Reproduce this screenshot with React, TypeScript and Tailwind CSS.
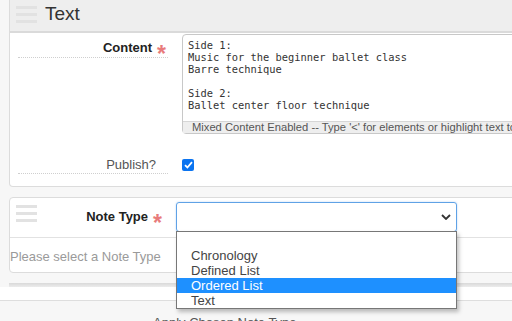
import React from 'react';

const sans = { fontFamily: '"Liberation Sans", Arial, sans-serif' };

/** 三条横线拖拽把手 */
function Handle() {
  return (
    <div className="flex w-[21px] flex-col gap-[4px]">
      <div className="h-[3px] bg-[#e2e2e2]" />
      <div className="h-[3px] bg-[#e2e2e2]" />
      <div className="h-[3px] bg-[#e2e2e2]" />
    </div>
  );
}

function Star() {
  return <span className="relative top-[3px] ml-[5px] text-[23px] leading-none font-bold text-[#e87b7b]">*</span>;
}

export default function App() {
  const options = ['', 'Chronology', 'Defined List', 'Ordered List', 'Text'];
  return (
    <div className="relative h-[321px] w-[512px] overflow-hidden bg-[#f7f7f7] text-[13px]" style={sans}>
      <div className="pl-[9px]">
        {/* Text 面板 */}
        <div className="w-[540px] rounded-b-[4px] border border-t-0 border-[#dcdcdc] bg-white">
          <div className="flex h-[33px] items-center gap-[8px] border-b-2 border-[#dadada] bg-[#eeeeee] pl-[6px] pb-[2px]">
            <Handle />
            <span className="text-[19px] text-[#333]">Text</span>
          </div>
          <div className="pb-[12px]">
            <div className="flex pt-[1px]">
              <div className="ml-[8px] flex h-[24px] w-[150px] items-start justify-end border-b border-dotted border-[#cfcfcf] pr-[2px] pt-[6px]">
                <span className="font-bold leading-4 text-[#222]">Content</span>
                <Star />
              </div>
              <div className="ml-[14px] flex h-[100px] w-[360px] flex-col rounded-[4px] border border-[#c8c8c8]">
                <pre
                  className="flex-1 pl-[5px] pt-[4px] text-[10.4px] leading-[12px] text-[#333]"
                  style={{ fontFamily: '"DejaVu Sans Mono", monospace' }}
                >{`Side 1:
Music for the beginner ballet class
Barre technique

Side 2:
Ballet center floor technique`}</pre>
                <div className="h-[12px] overflow-hidden whitespace-nowrap border-t border-[#d6d6d6] bg-[#eeeeee] pl-[9px] text-[11.2px] leading-[11px] text-[#555]">
                  Mixed Content Enabled -- Type '&lt;' for elements or highlight text to wrap
                </div>
              </div>
            </div>
            <div className="mt-[16px] flex">
              <div className="ml-[8px] flex h-[24px] w-[150px] items-start justify-end border-b border-dotted border-[#cfcfcf] pr-[12px] pt-[7px]">
                <span className="leading-4 text-[#555]">Publish?</span>
              </div>
              <div className="ml-[14px] mt-[9px] flex h-[12px] w-[12px] items-center justify-center rounded-[2px] bg-[#0b74f0]">
                <svg width="9" height="8" viewBox="0 0 9 8">
                  <path d="M1 4.2 L3.4 6.5 L8 1.2" stroke="white" strokeWidth="1.8" fill="none" />
                </svg>
              </div>
            </div>
          </div>
        </div>

        {/* Note Type 面板 */}
        <div className="mt-[10px] w-[540px] rounded-[4px] border border-[#dcdcdc] bg-white">
          <div className="flex h-[40px] border-b border-[#e2e2e2]">
            <div className="pl-[6px] pt-[7px]">
              <Handle />
            </div>
            <div className="flex w-[127px] justify-end pr-[2px] pt-[11px]">
              <span className="font-bold leading-4 text-[#222]">Note Type</span>
              <Star />
            </div>
            <div className="ml-[12px] mt-[4px] flex h-[30px] w-[281px] items-center justify-end rounded-[3px] border border-[#5fa2e6] pr-[5px] shadow-[0_0_2px_rgba(80,150,230,0.4)]">
              <svg width="10" height="6" viewBox="0 0 10 6">
                <path d="M1 1 L5 5 L9 1" stroke="#333" strokeWidth="1.8" fill="none" />
              </svg>
            </div>
          </div>
          <div className="h-[34px] pt-[11px] leading-4 text-[#9a9a9a]">Please select a Note Type</div>
        </div>

        <div className="mt-[10px] h-[4px] bg-gradient-to-b from-[#d9d9d9] to-[#ececec]" />
      </div>
      <div className="h-[14px] border-b border-[#dedede] bg-white" />
      <div className="pl-[153px] pt-[14px] text-[13px] leading-4 text-[#555]">Apply Chosen Note Type</div>

      {/* 下拉列表 */}
      <div className="absolute left-[176px] top-[231px] w-[281px] border border-[#777] bg-white pt-[1px] shadow-[2px_3px_4px_rgba(0,0,0,0.25)]">
        {options.map((o) => (
          <div
            key={o || 'empty'}
            className={
              o === 'Ordered List'
                ? 'flex h-[15px] items-center bg-[#1e90ff] pl-[14px] text-white'
                : 'flex h-[15px] items-center pl-[14px] text-[#444]'
            }
          >
            {o}
          </div>
        ))}
      </div>
    </div>
  );
}
